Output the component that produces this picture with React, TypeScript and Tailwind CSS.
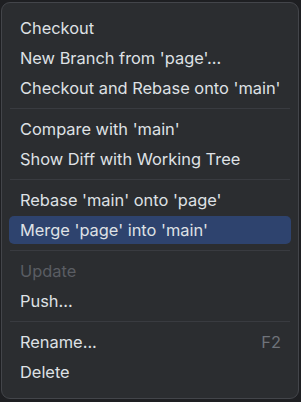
import React from 'react';

type Entry = { label: string; shortcut?: string; disabled?: boolean; active?: boolean } | 'sep';

const entries: Entry[] = [
  { label: 'Checkout' },
  { label: "New Branch from 'page'..." },
  { label: "Checkout and Rebase onto 'main'" },
  'sep',
  { label: "Compare with 'main'" },
  { label: 'Show Diff with Working Tree' },
  'sep',
  { label: "Rebase 'main' onto 'page'" },
  { label: "Merge 'page' into 'main'", active: true },
  'sep',
  { label: 'Update', disabled: true },
  { label: 'Push...' },
  'sep',
  { label: 'Rename...', shortcut: 'F2' },
  { label: 'Delete' },
];

const App: React.FC = () => {
  return (
    <div className="w-[301px] h-[402px] bg-[#1e1f22] pt-[2px] pl-[1px]" style={{ fontFamily: 'Inter, "Noto Sans", sans-serif' }}>
      <div className="w-[298px] h-[397px] bg-[#2b2d30] border border-[#43454a] rounded-[9px] px-[7px] pt-[10px] flex flex-col">
        {entries.map((e, i) =>
          e === 'sep' ? (
            <div key={i} className="py-[5px] px-[1px]">
              <div className="h-px bg-[#393b40]"></div>
            </div>
          ) : (
            <div key={i} className="h-[30px] py-px">
              <div
                className={`h-[28px] flex items-center justify-between pl-[11px] pr-[10px] rounded-[5px] text-[16.4px] ${
                  e.active ? 'bg-[#2e436e]' : ''
                } ${e.disabled ? 'text-[#5a5d63]' : 'text-[#dfe1e5]'}`}
              >
                <span>{e.label}</span>
                {e.shortcut && <span className="text-[#6f737a]">{e.shortcut}</span>}
              </div>
            </div>
          )
        )}
      </div>
    </div>
  );
};

export default App;
